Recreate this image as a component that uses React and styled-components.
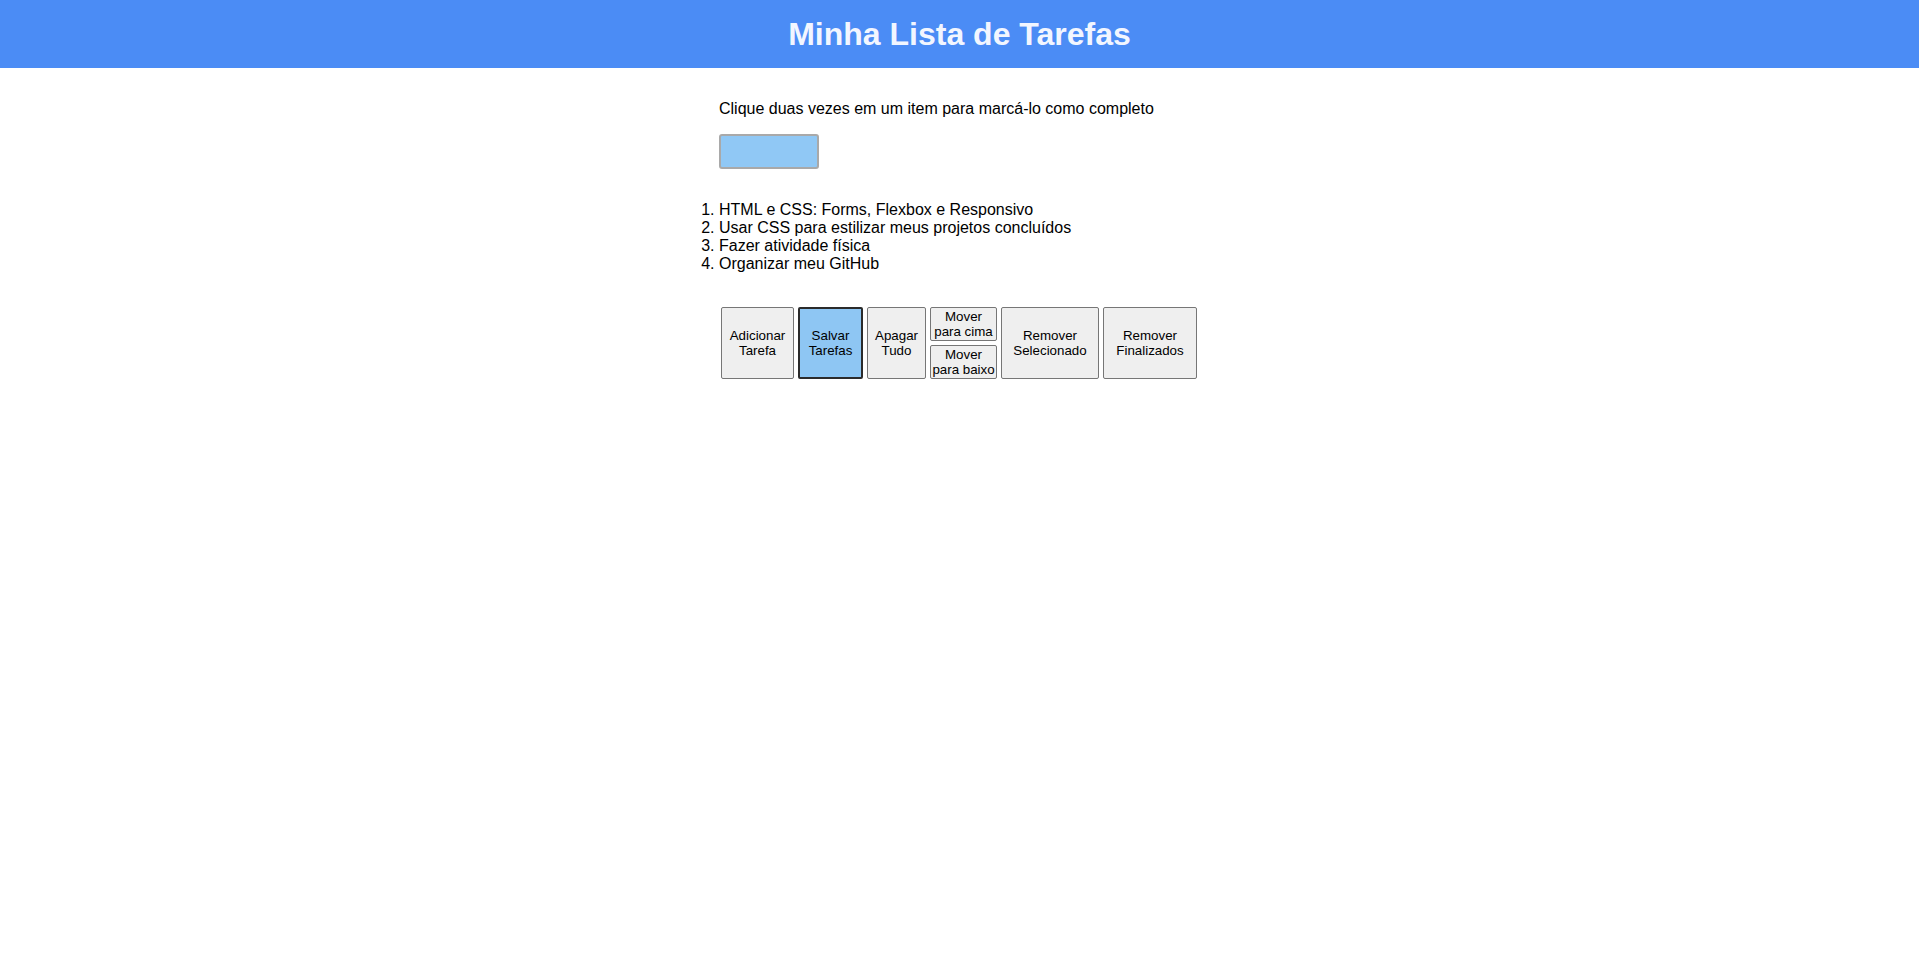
import React from "react";
import styled, { createGlobalStyle } from "styled-components";

const GlobalStyle = createGlobalStyle`
  body {
    margin: 0;
    background: #ffffff;
    font-family: "Liberation Sans", Arial, sans-serif;
    color: #000000;
  }
`;

const Header = styled.header`
  height: 68px;
  background: #4b8cf5;
  display: flex;
  align-items: center;
  justify-content: center;
`;

const Title = styled.h1`
  margin: 0;
  font-size: 32px;
  font-weight: 700;
  color: #f2f6ff;
`;

const Main = styled.main`
  width: 481px;
  margin: 0 auto;
  padding-top: 32px;
`;

const Hint = styled.p`
  margin: 0 0 16px;
  font-size: 16px;
  line-height: 18px;
`;

const TaskInput = styled.input`
  display: block;
  box-sizing: border-box;
  width: 100px;
  height: 35px;
  background: #90c8f5;
  border: 2px solid #a9a9a9;
  border-radius: 3px;
  outline: none;
`;

const TaskList = styled.ol`
  margin: 32px 0 34px;
  padding: 0;
  font-size: 16px;
`;

const Task = styled.li``;

const Buttons = styled.div`
  display: flex;
  gap: 4px;
  padding-left: 2px;
`;

const Button = styled.button`
  box-sizing: border-box;
  width: ${(p) => p.$w}px;
  height: ${(p) => p.$h || 72}px;
  padding: 0 1px;
  font-family: "Liberation Sans", Arial, sans-serif;
  font-size: 13.333px;
  line-height: 15px;
  color: #000000;
  background: ${(p) => (p.$active ? "#8ec6f3" : "#efefef")};
  border: ${(p) => (p.$active ? "2px solid #2b2b2b" : "1px solid #767676")};
  border-radius: 2px;
  cursor: pointer;
`;

const Stack = styled.div`
  display: flex;
  flex-direction: column;
  gap: 4px;
`;

const tasks = [
  "HTML e CSS: Forms, Flexbox e Responsivo",
  "Usar CSS para estilizar meus projetos concluídos",
  "Fazer atividade física",
  "Organizar meu GitHub",
];

export default function App() {
  return (
    <>
      <GlobalStyle />
      <Header>
        <Title>Minha Lista de Tarefas</Title>
      </Header>
      <Main>
        <Hint>Clique duas vezes em um item para marcá-lo como completo</Hint>
        <TaskInput type="text" />
        <TaskList>
          {tasks.map((t) => (
            <Task key={t}>{t}</Task>
          ))}
        </TaskList>
        <Buttons>
          <Button $w={73}>
            Adicionar
            <br />
            Tarefa
          </Button>
          <Button $w={65} $active>
            Salvar
            <br />
            Tarefas
          </Button>
          <Button $w={59}>
            Apagar
            <br />
            Tudo
          </Button>
          <Stack>
            <Button $w={67} $h={34}>
              Mover
              <br />
              para cima
            </Button>
            <Button $w={67} $h={34}>
              Mover
              <br />
              para baixo
            </Button>
          </Stack>
          <Button $w={98}>
            Remover
            <br />
            Selecionado
          </Button>
          <Button $w={94}>
            Remover
            <br />
            Finalizados
          </Button>
        </Buttons>
      </Main>
    </>
  );
}
